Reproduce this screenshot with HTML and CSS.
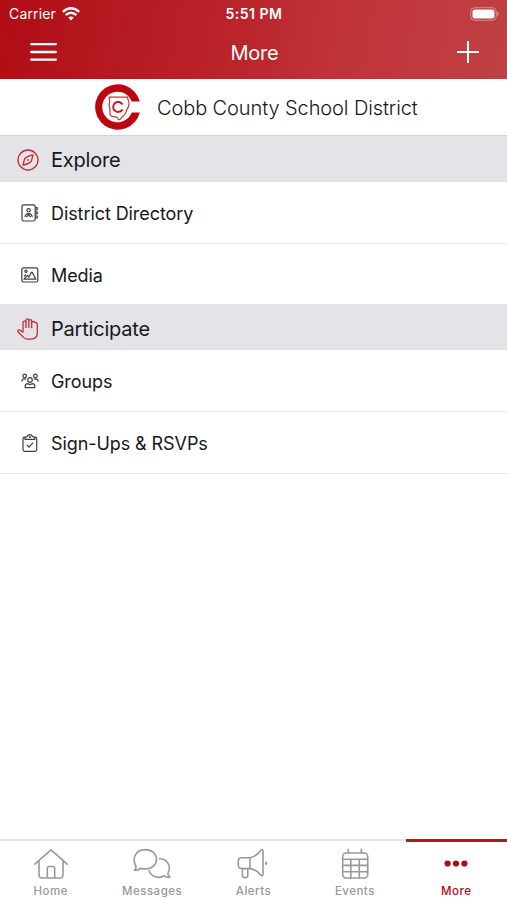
FILE: index.html
```html
<!DOCTYPE html>
<html lang="en">
<head>
  <meta charset="UTF-8">
  <meta name="viewport" content="width=device-width, initial-scale=1">
  <title>More</title>
  <link rel="stylesheet" href="styles.css">
</head>
<body>
  <div class="app">
    <header class="header">
      <div class="status">
        <div class="carrier">
          <span>Carrier</span>
          <svg width="18" height="14" viewBox="0 0 18 14" fill="none" stroke="#fff" stroke-width="2.3">
            <path d="M.8 4.8Q9-2.2 17.2 4.8M3.7 8Q9 3.6 14.3 8"/>
            <path d="M6.2 10.6Q9 8.4 11.8 10.6L9 13.5Z" fill="#fff" stroke="none"/>
          </svg>
        </div>
        <div class="time">5:51 PM</div>
        <div class="battery">
          <svg width="30" height="14" viewBox="0 0 30 14">
            <rect x=".7" y=".7" width="25.6" height="12.6" rx="4" fill="none" stroke="#fff" stroke-opacity=".4"/>
            <rect x="2.5" y="2.5" width="22" height="9" rx="2.2" fill="#fff"/>
            <path d="M27.5 4.5Q30 7 27.5 9.5Z" fill="#fff" fill-opacity=".5"/>
          </svg>
        </div>
      </div>
      <div class="nav">
        <svg width="27" height="20" viewBox="0 0 27 20" stroke="#fff" stroke-width="2.3" stroke-linecap="round">
          <path d="M1.2 2.2h24.6M1.2 10h24.6M1.2 17.7h24.6"/>
        </svg>
        <h1 class="nav-title">More</h1>
        <svg class="nav-add" width="22" height="22" viewBox="0 0 22 22" stroke="#fff" stroke-width="2">
          <path d="M0 11h22M11 0v22"/>
        </svg>
      </div>
    </header>

    <div class="brand">
      <svg width="46" height="46" viewBox="0 0 46 46" fill="none">
        <path d="M44.8 17.5A22.7 22.7 0 1 0 44.8 28.5H36.8A15.3 15.3 0 1 1 36.8 17.5Z" fill="#bd0510"/>
        <path d="M14.2 13.2h18.2c.6 3 1.8 4.5 1.6 7.2-.2 3.2-2.5 4.6-3 7.7-.5 2.6-2.5 3.4-4 5.1-1.3 1.5-2.3 3-3.4 2.6-1-.4-.4-2.2-1.7-2.6-2-.6-4.4-.3-6.5-1.7-1.2-3.2.3-5-.8-8.1-.8-1.9-.7-3.1-.1-4.6.5-1.7-.4-3.2-.3-5.6z" stroke="#c5323b" stroke-width="1.2"/>
        <path d="M27.5 20.4A5 5 0 1 0 27.5 25.4" stroke="#c11c26" stroke-width="2"/>
      </svg>
      <span class="brand-name">Cobb County School District</span>
    </div>

    <main class="menu">
      <h2 class="section section-first">
        <svg class="section-icon" width="22" height="22" viewBox="0 0 22 22">
          <circle cx="11" cy="11" r="10"/>
          <path d="M16 6 14.2 12.6Q10.5 16 6 16L7.7 9.5Q11 6.4 16 6Z"/>
          <circle cx="11" cy="11" r=".3"/>
        </svg>
        <span>Explore</span>
      </h2>
      <div class="item">
        <svg class="item-icon" width="18" height="18" viewBox="0 0 18 18">
          <rect x="1" y=".8" width="13.2" height="16.2" rx="1.8"/>
          <circle cx="7.6" cy="6.3" r="1.7"/>
          <path d="M4 13Q4.3 9.6 7.6 9.6T11.2 13M5.5 13 7.6 10.8 9.7 13M14.2 3.7h2v2h-2M14.2 7.8h2v2h-2M14.2 12h2v2h-2"/>
        </svg>
        <span>District Directory</span>
      </div>
      <div class="item">
        <svg class="item-icon" width="18" height="18" viewBox="0 0 18 18">
          <rect x=".8" y="1.8" width="16" height="14.2" rx="1.8"/>
          <circle cx="5" cy="5.3" r="1.1"/>
          <path d="M2.9 13.2 6.4 9.4 7.9 11 10.4 6.4H11.3L14.9 13.2ZM3 10.2 4.8 8.5"/>
        </svg>
        <span>Media</span>
      </div>
      <h2 class="section">
        <svg class="section-icon" width="22" height="22" viewBox="0 0 22 22">
          <path d="M6 14.6V4.6q0-1.4 1.5-1.4T9 4.6V10M9 10V2.3Q9 .8 10.4.8t1.4 1.5V10M11.8 10V2.9q0-1.3 1.5-1.3t1.4 1.4v7.2M14.7 10.2V4.7q0-1.2 1.6-1.2t1.6 1.3M17.9 4.8q2.4-.5 2.4 1.2v9q0 6.1-6.4 6.1H11q-2.6 0-4.2-1.5L1.2 14Q.4 12.5 1.5 12t2 .2l2.7 2.2"/>
        </svg>
        <span>Participate</span>
      </h2>
      <div class="item">
        <svg class="item-icon" width="18" height="18" viewBox="0 0 18 18">
          <circle cx="3.7" cy="4" r="1.8"/>
          <circle cx="14.3" cy="4" r="1.8"/>
          <circle cx="9" cy="8" r="2.3"/>
          <path d="M.8 9.4Q.8 7 3.6 6.8L5 7.4M17.2 9.4Q17.2 7 14.4 6.8L13 7.4M4.2 15.6v-1.7q0-1.8 2.6-2.2L9 12.6l2.2-.9q2.6.4 2.6 2.2v1.7Z"/>
        </svg>
        <span>Groups</span>
      </div>
      <div class="item">
        <svg class="item-icon" width="18" height="18" viewBox="0 0 18 18">
          <path d="M4.5 3.2H3.2Q2 3.2 2 4.4v11.4Q2 17.3 3.5 17.3h10.7q1.5 0 1.5-1.5V4.4q0-1.2-1.2-1.2h-1.3M4 5.4V3.7L6.2 2.5Q7 .6 8.9.6t2.7 1.9l2.2 1.2V5.4ZM5.9 11 8 13.1 12.1 8.7"/>
          <circle cx="8.9" cy="2.9" r=".4"/>
        </svg>
        <span>Sign-Ups &amp; RSVPs</span>
      </div>
    </main>

    <nav class="tabs">
      <div class="tab">
        <svg class="tab-icon" width="38" height="32" viewBox="0 0 38 32">
          <path d="M2.8 16.2 19 1.8 35.2 16.2M7 13v13.7Q7 30 10.3 30h17.4q3.3 0 3.3-3.3V13M15.3 30V20.5q0-2 2-2h3.4q2 0 2 2V30"/>
        </svg>
        <span>Home</span>
      </div>
      <div class="tab">
        <svg class="tab-icon" width="38" height="32" viewBox="0 0 38 32">
          <path d="M1.4 22.2C3.5 20.5 3.5 19 2.5 17.2-.5 11.5 1.4 1.6 12.3 1.6c6.5 0 11.2 4.2 11.2 9.7S19 21 12.3 21c-2.2 0-3.4-.4-5-.6Q5 22.8 1.4 22.2Z"/>
          <path d="M26.5 10.8c7.3 0 12.2 6.8 8.7 13.8-.8 1.5.1 3 1.8 4.5-2.1.6-4 .1-5.6-1.3-5.5 3.2-13.2 1.2-15.3-5"/>
        </svg>
        <span>Messages</span>
      </div>
      <div class="tab">
        <svg class="tab-icon" width="38" height="32" viewBox="0 0 38 32">
          <path d="M16 9.7H7.8Q4.3 9.7 4.3 13v4.3q0 3.3 3.5 3.3H16V9.7Q22.5 8.2 26 3.2q3-3.4 3 .2v22.8q0 3-3 .2-4-5-10-5.8M8.4 20.6v7q0 2 2 2h1.2q2.2 0 2.2-2v-7"/>
          <path d="M32 14.2q1 1 0 2Z" fill="#999"/>
        </svg>
        <span>Alerts</span>
      </div>
      <div class="tab">
        <svg class="tab-icon" width="38" height="32" viewBox="0 0 38 32">
          <rect x="6.7" y="5" width="25" height="25" rx="3.5"/>
          <path d="M12.3 1.4V5M25.3 1.4V5M6.7 11.2h25M6.7 17.4h25M6.7 23.7h25M14.8 11.2V30M23.3 11.2V30"/>
        </svg>
        <span>Events</span>
      </div>
      <div class="tab tab-active">
        <svg width="38" height="32" viewBox="0 0 38 32" fill="#b20a17">
          <circle cx="10.6" cy="15.5" r="3.1"/>
          <circle cx="19" cy="15.5" r="3.1"/>
          <circle cx="27.4" cy="15.5" r="3.1"/>
        </svg>
        <span>More</span>
      </div>
    </nav>
  </div>
</body>
</html>
```
FILE: styles.css
```css
* { box-sizing: border-box; }
body { margin: 0; font-family: Inter, "Liberation Sans", sans-serif; color: #17171a; background: #fff; }
svg { display: block; flex: none; }
h1, h2 { margin: 0; font-weight: 400; }

.app { height: 900px; display: flex; flex-direction: column; }

.header { height: 79px; color: #fff; background: linear-gradient(100deg, #b10d15 0%, #ba252c 48%, #bf3338 65%, #c04044 100%); }
.status { height: 27px; padding: 0 7px 0 9px; display: grid; grid-template-columns: 1fr auto 1fr; align-items: center; font-size: 14px; }
.carrier { display: flex; align-items: center; gap: 6px; letter-spacing: 0.15px; }
.time { margin-right: 1px; font-weight: 600; font-size: 14px; letter-spacing: 0.5px; }
.battery { display: flex; justify-content: flex-end; }
.nav { height: 50px; padding: 0 28px 0 30px; display: grid; grid-template-columns: 1fr auto 1fr; align-items: center; }
.nav-title { padding-top: 1px; font-size: 20px; letter-spacing: -0.2px; }
.nav-add { justify-self: end; }

.brand { height: 56px; padding-left: 95px; display: flex; align-items: center; gap: 16px; }
.brand-name { padding-top: 2px; font-size: 20px; font-weight: 300; letter-spacing: -0.1px; }

.section { height: 45px; padding: 2px 0 0 17px; display: flex; align-items: center; gap: 12px; background: #e4e3e8; font-size: 20px; letter-spacing: -0.2px; }
.section-first { height: 47px; border-top: 1px solid #d2d2d5; }
.section-icon { fill: none; stroke: #c32b37; stroke-width: 1.3; stroke-linejoin: round; }
.item { height: 61.7px; padding: 2px 0 0 21px; display: flex; align-items: center; gap: 12px; border-bottom: 1px solid #e6e6e8; font-size: 18px; letter-spacing: -0.08px; }
.item:has(+ .section) { border-bottom-color: #e4e3e8; }
.item-icon { margin-top: -1px; fill: none; stroke: #3f3f42; stroke-width: 1.2; stroke-linejoin: round; }

.tabs { height: 61px; margin-top: auto; display: grid; grid-template-columns: repeat(5, 1fr); }
.tab { padding-top: 7px; display: flex; flex-direction: column; align-items: center; gap: 4px; border-top: 2px solid #e5e5e5; color: #999; font-size: 11.5px; line-height: 14px; font-weight: 500; letter-spacing: 0.5px; }
.tab-icon { fill: none; stroke: #999; stroke-width: 1.6; stroke-linecap: round; stroke-linejoin: round; }
.tab-active { padding-top: 6px; border-top: 3px solid #b51622; color: #b20a17; }
```
